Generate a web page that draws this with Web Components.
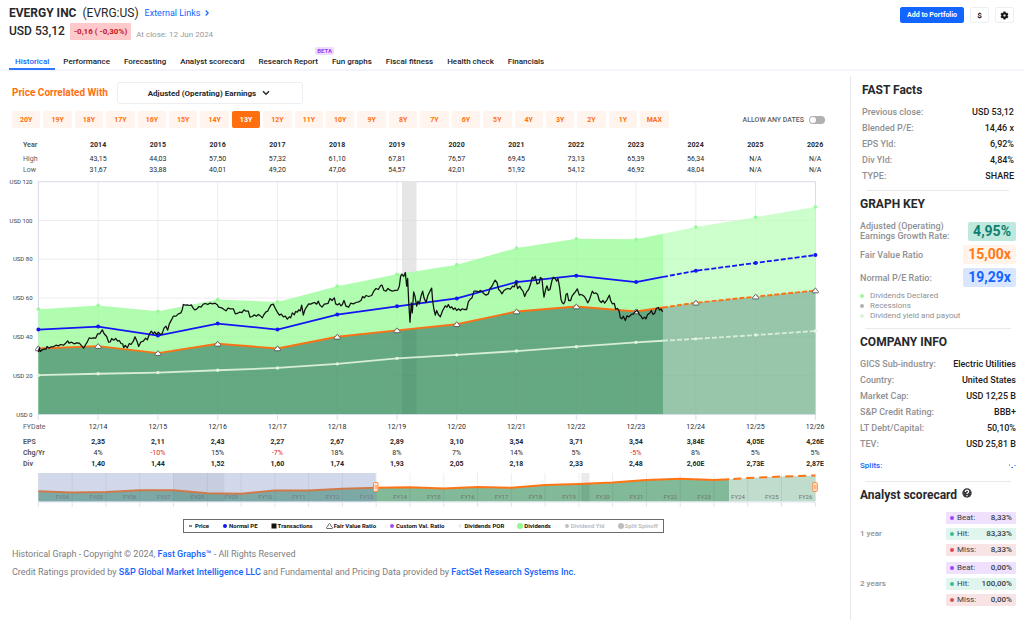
<!DOCTYPE html>
<html lang="en">
<head>
<meta charset="utf-8">
<meta name="viewport" content="width=device-width, initial-scale=1">
<title>EVERGY INC (EVRG:US) - Historical Graph</title>
<style>
  body { margin: 0; background: #fff; color: #26282c; font-family: Roboto, "Liberation Sans", sans-serif; }
</style>
</head>
<body>
<fg-app></fg-app>
<script>
const define = (name, render) => customElements.define(name, class extends HTMLElement {
  connectedCallback() {
    if (this.shadowRoot) return;
    const root = this.attachShadow({ mode: 'open' });
    const t = document.createElement('template');
    t.innerHTML = '<style>*{box-sizing:border-box}:host{display:block}button,select,input{font-family:inherit;margin:0}a{color:#1463ff;text-decoration:none}</style>' + render(this);
    root.append(t.content.cloneNode(true));
  }
});

define('fg-header', () => `
<style>
  :host { display: flex; justify-content: space-between; align-items: flex-start; padding: 6px 10px 0 9px; height: 47px; }
  h1 { display: flex; align-items: center; gap: 6px; margin: 0; font-size: 12px; line-height: 14px; font-weight: 700; }
  h1 .tick { font-weight: 400; }
  h1 a { font-size: 9px; font-weight: 400; display: flex; align-items: center; gap: 5px; }
  .price { display: flex; align-items: center; gap: 5px; margin-top: 3px; font-size: 12px; line-height: 17px; font-weight: 500; }
  .chg { background: #fdc9cb; color: #c9151e; border-radius: 1px; padding: 0 4px; font-size: 8px; font-weight: 700; }
  .date { font-size: 8px; font-weight: 400; color: #98999c; padding-top: 6px; line-height: 11px; }
  .actions { display: flex; gap: 6px; padding-top: 1px; }
  button { height: 16px; padding: 0; border: 1px solid #eeeef6; border-radius: 2px; background: #fff; width: 19px; display: grid; place-items: center; font-size: 8px; font-weight: 700; color: #111; }
  .add { width: auto; padding: 0 6px; background: #1266ff; border-color: #1266ff; color: #fff; font-size: 7px; }
</style>
<div>
  <h1><span>EVERGY INC</span><span class="tick">(EVRG:US)</span>
    <a href="#links">External Links <svg width="4" height="6" viewBox="0 0 4 6"><path d="M.7.5 3.2 3 .7 5.5" fill="none" stroke="#1463ff" stroke-width="1.2"/></svg></a></h1>
  <div class="price"><span>USD 53,12</span><span class="chg">-0,16 ( -0,30%)</span><span class="date">At close: 12 Jun 2024</span></div>
</div>
<div class="actions">
  <button class="add">Add to Portfolio</button>
  <button>$</button>
  <button aria-label="Settings"><svg width="9" height="9" viewBox="0 0 24 24"><path d="M19.4 13a7.6 7.6 0 0 0 0-2l2.1-1.7a.5.5 0 0 0 .1-.6l-2-3.5a.5.5 0 0 0-.6-.2l-2.5 1a7.3 7.3 0 0 0-1.7-1l-.4-2.6a.5.5 0 0 0-.5-.4h-4a.5.5 0 0 0-.5.4L9 5a7.6 7.6 0 0 0-1.7 1l-2.5-1a.5.5 0 0 0-.6.2l-2 3.5a.5.5 0 0 0 .1.6L4.5 11a8 8 0 0 0 0 2l-2.2 1.7a.5.5 0 0 0-.1.6l2 3.5c.1.2.4.3.6.2l2.5-1c.5.4 1.1.7 1.7 1l.4 2.6c0 .2.2.4.5.4h4c.2 0 .5-.2.5-.4l.4-2.6a7.3 7.3 0 0 0 1.7-1l2.5 1c.2.1.5 0 .6-.2l2-3.5a.5.5 0 0 0-.1-.6zM12 15.5a3.5 3.5 0 1 1 0-7 3.5 3.5 0 0 1 0 7z" fill="#111" stroke="#111" stroke-width="1"/></svg></button>
</div>`);

define('fg-tabs', () => `
<style>
  nav { display: flex; gap: 2px; padding-left: 9px; height: 24px; border-bottom: 2px solid #f4f4fc; }
  a { position: relative; padding: 9px 6px 0; font-size: 8px; line-height: 12px; font-weight: 500; color: #222327; height: 23px; }
  a.on { color: #1463ff; border-bottom: 2px solid #2f76ff; }
  sup { position: absolute; right: -10px; top: 0; padding: 0 2px; border-radius: 2px; background: #eedcff; color: #9b40f5; font-size: 6px; line-height: 8px; font-weight: 700; }
</style>
<nav>${['Historical', 'Performance', 'Forecasting', 'Analyst scorecard', 'Research Report', 'Fun graphs', 'Fiscal fitness', 'Health check', 'Financials']
  .map((t, i) => `<a href="#tab${i}"${i ? '' : ' class="on"'}>${t}${i === 4 ? '<sup>BETA</sup>' : ''}</a>`).join('')}</nav>`);

define('fg-controls', () => `
<style>
  :host { padding: 0 20px 0 4px; }
  .metric { display: flex; align-items: center; gap: 9px; }
  .metric > label { color: #ff6f0f; font-size: 10px; line-height: 12px; font-weight: 700; }
  .pick { display: grid; width: 186px; }
  .pick > * { grid-area: 1 / 1; }
  select { appearance: none; width: 100%; height: 22px; border: 1px solid #ededf3; border-radius: 3px; background: #fff; font-size: 8px; font-weight: 700; color: #26282c; text-align: center; text-align-last: center; padding: 0 16px 0 0; }
  .pick svg { justify-self: end; align-self: center; margin-right: 33px; pointer-events: none; }
  .row { display: flex; align-items: center; gap: 74px; margin-top: 7px; }
  .years { display: flex; flex: 1; gap: 3px; }
  button { flex: 1 1 0; min-width: 0; height: 17px; padding: 0; border: 0; border-radius: 2px; background: #fff5ee; color: #ff6f0f; font-size: 7px; font-weight: 700; }
  button.on { background: #ff6f0f; color: #fff; }
  .any { display: flex; align-items: center; gap: 5px; color: #5b5c60; font-size: 7px; font-weight: 500; white-space: nowrap; }
  input { appearance: none; width: 16px; height: 8px; border-radius: 4px; background: #b0b0b3; display: flex; padding: 1px; }
  input::before { content: ''; width: 6px; height: 6px; border-radius: 50%; background: #fff; }
</style>
<div class="metric"><label for="metric">Price Correlated With</label>
  <div class="pick"><select id="metric"><option>Adjusted (Operating) Earnings</option></select>
  <svg width="8" height="6" viewBox="0 0 8 6"><path d="M1 1.2 4 4.2 7 1.2" fill="none" stroke="#26282c" stroke-width="1.5"/></svg></div>
</div>
<div class="row">
  <div class="years">${[20, 19, 18, 17, 16, 15, 14, 13, 12, 11, 10, 9, 8, 7, 6, 5, 4, 3, 2, 1].map(n => `<button${n === 13 ? ' class="on"' : ''}>${n}Y</button>`).join('')}<button>MAX</button></div>
  <label class="any">ALLOW ANY DATES <input type="checkbox"></label>
</div>`);

const tableCss = `
  table { width: 100%; table-layout: fixed; border-collapse: collapse; }
  th, td { padding: 0; text-align: center; font-size: 7px; line-height: 11px; font-weight: 400; white-space: nowrap; }
  tr > :first-child { width: 7.2%; text-align: left; padding-left: 15px; color: #5b5c60; }
  .b > * { font-weight: 700; }
  .neg { color: #e0222c; }`;
const row = (label, cells, cls = '', tag = 'td') => `<tr class="${cls}"><th scope="row">${label}</th>${cells.map(c => `<${tag}${c[0] === '-' ? ' class="neg"' : ''}>${c}</${tag}>`).join('')}</tr>`;
const list = s => s.split(' ');

define('fg-price-table', () => `
<style>${tableCss} .year > * { padding-bottom: 3px; }</style>
<table>
${row('Year', list('2014 2015 2016 2017 2018 2019 2020 2021 2022 2023 2024 2025 2026'), 'b year', 'th')}
${row('High', list('43,15 44,03 57,50 57,32 61,10 67,81 76,57 69,45 73,13 65,39 56,34 N/A N/A'))}
${row('Low', list('31,67 33,88 40,01 49,20 47,06 54,57 42,01 51,92 54,12 46,92 48,04 N/A N/A'))}
</table>`);

define('fg-eps-table', () => `
<style>${tableCss} .date > * { padding-bottom: 4px; }</style>
<table>
${row('FYDate', list('12/14 12/15 12/16 12/17 12/18 12/19 12/20 12/21 12/22 12/23 12/24 12/25 12/26'), 'date')}
${row('EPS', list('2,35 2,11 2,43 2,27 2,67 2,89 3,10 3,54 3,71 3,54 3,84E 4,05E 4,26E'), 'b')}
${row('<b>Chg/Yr</b>', list('4% -10% 15% -7% 18% 8% 7% 14% 5% -5% 8% 5% 5%'))}
${row('Div', list('1,40 1,44 1,52 1,60 1,74 1,93 2,05 2,18 2,33 2,48 2,60E 2,73E 2,87E'), 'b')}
</table>`);

/* Price traces, in thirds of a chart unit: [x offset, points]. */
const TRACE = [
  [0, '115,533 118,520 121,531 127,526 133,523 138,524 141,516 148,521 152,517 160,517 168,512 175,514 182,510 190,512 197,506 203,499 207,506 215,503 222,508 230,505 238,506 245,514 251,521 257,510 262,502 268,490 274,492 280,490 287,491 293,478 299,478 303,472 307,466 312,477 320,486 326,503 331,502 335,492 341,497 347,492 353,500 358,498 363,507 368,508 371,519 376,513 382,520 388,507 393,510 400,500 405,487 411,500 416,516 422,503 430,500 437,491 442,496 448,479 454,470 460,478 464,472 470,480 475,473 481,480 487,476 492,461 498,455 503,467 508,448 514,437 520,425 528,425 535,418 543,415 547,405 550,390 556,392 562,391 568,393 574,391 579,400 584,406 590,404 597,396 603,398 610,389 617,387 623,390 630,386 638,388 645,386 652,391 656,398 665,400 672,405 678,409 684,401 692,403 700,403 706,418 712,417 718,413 726,414 732,406 738,410 745,410 750,428 757,426 763,421 769,425 775,420 781,424 787,430 792,420 798,412 803,410 808,400 813,391 820,389 826,402 832,413 838,422 844,419 850,427 856,425 862,434'],
  [840, '28,427 32,430 37,415 43,421 47,411 52,413 56,406 61,409 65,392 70,422 75,405 80,397 86,388 92,389 98,386 104,384 110,389 115,380 120,392 126,398 133,389 138,388 144,387 150,372 156,378 163,370 167,388 173,391 178,387 183,394 187,390 192,378 198,395 206,398 212,386 220,388 228,384 236,382 243,378 248,366 253,370 258,363 266,366 275,363 282,349 288,342 295,345 302,333 306,332 312,348 318,350 324,342 330,347 337,350 343,348 353,347 358,335 362,305 366,299 371,306 376,294 380,335 383,312 386,380 390,443 394,385 397,415 401,352 405,365 410,395 414,380 418,388 423,365 428,350 432,370 438,384 444,362 450,350 455,341 458,380 462,405 466,422 470,408 475,420 481,427 488,408 496,394 501,398 505,390 510,400 515,397 520,405 525,400 530,408 536,403 541,408 547,403 553,405 560,405 565,382 570,375 576,370 582,350 589,350 596,352 601,348 607,352 612,358 618,362 625,358 630,342 636,335 641,325 645,317 651,324 656,345 661,350 666,358 672,348 678,344 684,342 691,344 698,335 703,337 708,322 713,342 719,335 724,344 729,350 734,366 740,352 746,345 752,328 757,308 761,313 766,305 771,328 778,325 781,309 786,313 789,345 792,368 797,345 801,334 805,348'],
  [1650, '0,345 6,318 10,308 15,312 20,320 24,312 29,340 33,375 37,385 41,388 45,380 48,360 52,357 56,378 62,378 66,365 72,357 76,352 82,343 88,362 92,360 98,362 103,366 108,374 113,385 118,377 122,365 127,350 132,357 138,355 143,360 148,378 154,384 159,378 164,386 171,376 178,362 182,378 187,388 193,387 197,404 202,402 207,408 211,430 215,433 220,425 226,438 231,424 237,427 244,420 250,419 255,412 262,407 268,420 273,425 278,433 284,428 288,433 293,420 299,416 304,408 309,420 314,416 319,402 325,399 329,407 333,403 338,412']
];
const tracePoints = TRACE.flatMap(([dx, p]) => p.split(' ').map(q => {
  const [a, b] = q.split(',').map(Number);
  return (a + dx) + ',' + b;
})).join(' ');

define('fg-chart', () => {
  const eps = [2.27, 2.35, 2.11, 2.43, 2.27, 2.67, 2.89, 3.10, 3.54, 3.71, 3.54, 3.84, 4.05, 4.26];
  const div = [1.35, 1.40, 1.44, 1.52, 1.60, 1.74, 1.93, 2.05, 2.18, 2.33, 2.48, 2.60, 2.73, 2.87];
  const X0 = 30.4, STEP = 59.77, Y0 = 238.5, K = 1.94, NOW = 655;
  const x = i => +(X0 + STEP * i).toFixed(2), y = v => +(Y0 - v * K).toFixed(2);
  const s = {
    total: eps.map((e, i) => y(15 * (e + div[i]))), fair: eps.map(e => y(15 * e)),
    pe: eps.map(e => y(19.29 * e)), div: div.map(d => y(15 * d))
  };
  const nowT = (NOW - x(10)) / STEP;
  const at = a => +(a[10] + (a[11] - a[10]) * nowT).toFixed(2);
  const past = a => a.slice(0, 11).map((v, i) => `${x(i)},${v}`).join(' ') + ` ${NOW},${at(a)}`;
  const next = a => `${NOW},${at(a)} ` + a.slice(11).map((v, i) => `${x(i + 11)},${v}`).join(' ');
  const areas = (a, fill, fill2) => `<polygon points="${X0},${Y0} ${past(a)} ${NOW},${Y0}" fill="${fill}"/>
    <polygon points="${NOW},${Y0} ${next(a)} ${x(13)},${Y0}" fill="${fill2}"/>`;
  const line = (a, c, w) => `<polyline points="${past(a)}" stroke="${c}" stroke-width="${w}" fill="none"/><polyline points="${next(a)}" stroke="${c}" stroke-width="${w}" stroke-dasharray="5 2" fill="none"/>`;
  const dots = (a, c, r) => a.map((v, i) => `<circle cx="${x(i)}" cy="${v}" r="${r}" fill="${c}"/>`).join('');
  let grid = '', labels = '', over = '';
  for (let i = 0; i < 14; i++) {
    grid += `<path d="M${x(i)} 5.5V244" stroke="${i % 13 ? '#f1f1f6' : '#d5dbea'}"/><path d="M${x(i)} 239V244" stroke="#dfe3f2"/>`;
    over += i % 13 ? `<path d="M${x(i)} 5.5V${Y0}" stroke="#000" stroke-opacity=".02"/>` : '';
  }
  for (let v = 0; v <= 120; v += 20) {
    grid += `<path d="M${X0} ${y(v)}H${x(13)}" stroke="${v % 120 ? '#f1f1f3' : '#d5dbea'}"/>`;
    over += v % 120 ? `<path d="M${X0} ${y(v)}H${x(13)}" stroke="#000" stroke-opacity=".02"/>` : '';
    labels += `<text x="24.5" y="${y(v) + 2}" text-anchor="end">USD ${v}</text>`;
  }
  return `
<style>
  svg { display: block; width: 100%; height: auto; overflow: visible; }
  text { font-size: 6px; fill: #3c3d41; }
</style>
<svg viewBox="0 0 837 246" role="img" aria-label="Historical price and valuation">
  ${grid}
  <rect x="394" y="5" width="14.5" height="233" fill="#e6e6e6"/>
  ${areas(s.total, '#b0fdb0', '#ccffcc')}
  ${areas(s.fair, '#65a983', '#98c6ab')}
  <polygon points="394,${y(43.4)} 408.5,${y(44)} 408.5,${Y0} 394,${Y0}" fill="#5d9f7a"/>
  ${over}
  <path d="M${X0} ${Y0}H${x(13)}" stroke="#d5dbea"/>
  ${dots(s.total, '#96fb96', 1.8)}
  ${line(s.div, '#d7edd7', 1.8)}${dots(s.div, '#e2f3e2', 1.7)}
  ${line(s.pe, '#1414f5', 1.8)}${dots(s.pe, '#1414f5', 2)}
  ${line(s.fair, '#f97316', 1.9)}
  ${s.fair.map((v, i) => `<path d="M${x(i) - 3} ${v + 1.8}q0 .5.5.5h5q.5 0 .5-.5c0-1.5-1-2-1.5-2.2q-.5-1.9-1.5-1.9t-1.5 1.9c-.5.2-1.5.7-1.5 2.2z" fill="#fff" stroke="#444" stroke-width=".8"/>`).join('')}
  <g transform="translate(-8 -1) translate(0 -.5) scale(.33333)"><polyline points="${tracePoints}" fill="none" stroke="#111" stroke-width="3.8" stroke-linejoin="round"/></g>
  ${labels}
</svg>`;
});

define('fg-range', () => {
  const X0 = 30.4, S = 33.78, B = 31.5;
  const v = [21.3, 22.5, 22, 20.3, 20.3, 23.3, 23.7, 20.5, 20.5, 18.7, 17.7, 17.3, 18.5, 16.9, 17.8, 15, 14, 12.5, 10, 8.7, 10];
  const x = i => +(X0 + S * i).toFixed(2);
  const past = v.map((q, i) => `${x(i)},${q}`).join(' ') + ' 721.3,9.2';
  const next = `721.3,9.2 ${x(21)},8 ${x(22)},6.5 ${x(23)},5.5`;
  let ticks = '', text = '';
  for (let i = 0; i < 24; i++) {
    ticks += `<path d="M${x(i)} 3V31" stroke="#000" stroke-opacity=".07"/><path d="M${x(i)} 32V37" stroke="#dfe3f2"/>`;
    if (i) text += `<text x="${x(i) - 3}" y="29" text-anchor="end">FY${String(i + 3).padStart(2, '0')}</text>`;
  }
  const grip = cx => `<rect x="${cx - 2}" y="12.5" width="4.5" height="9" rx="1" fill="#ffe3d0" stroke="#ff8a3c"/><path d="M${cx - .3} 15v4M${cx + 1} 15v4" stroke="#ff8a3c" stroke-width=".6"/>`;
  return `
<style>svg { display: block; width: 100%; height: auto; } text { font-size: 6px; fill: #73726f; }</style>
<svg viewBox="0 0 837 40" role="img" aria-label="Date range">
  <polygon points="${X0},${B} ${past} 721.3,${B}" fill="#82ba99"/>
  <polygon points="721.3,${B} ${next} ${x(23)},${B}" fill="#c0dccc"/>
  <rect x="165.3" y="3" width="51" height="28.5" fill="#000" fill-opacity=".06"/>
  <rect x="573.3" y="3" width="8.2" height="28.5" fill="#000" fill-opacity=".08"/>
  ${ticks}
  <path d="M${X0} 32H${x(23)}" stroke="#dfe3f2"/>
  <polyline points="${past}" fill="none" stroke="#ff7414" stroke-width="2"/>
  <polyline points="${next}" fill="none" stroke="#ff7414" stroke-width="2" stroke-dasharray="8 5" stroke-dashoffset="9"/>
  ${text}
  <rect x="${X0}" y="3" width="337.3" height="28.5" fill="#7088bf" fill-opacity=".33"/>
  ${grip(367.5)}${grip(806.8)}
</svg>`;
});

define('fg-legend', () => {
  const c = (f, r) => `<svg width="6" height="6" viewBox="0 0 6 6"><circle cx="3" cy="3" r="${r}" fill="${f}"/></svg>`;
  const items = [
    ['<svg width="3" height="6" viewBox="0 0 3 6"><path d="M0 3h3" stroke="#111"/></svg>', 'Price'],
    [c('#1414f5', 2), 'Normal PE'],
    ['<svg width="6" height="6" viewBox="0 0 6 6"><path d="M.5.5h5v5h-5z" fill="#111"/></svg>', 'Transactions'],
    ['<svg width="7" height="6" viewBox="0 0 7 6"><path d="M.5 5q0 .5.5.5h5q.5 0 .5-.5c0-1.3-1-1.6-1.5-1.8Q4.7.6 3.5.6T2 3.2C1.5 3.4.5 3.7.5 5z" fill="#fff" stroke="#333" stroke-width=".7"/></svg>', 'Fair Value Ratio'],
    [c('#a04df5', 2), 'Custom Val. Ratio'], [c('#e2f3e2', 1.7), 'Dividends POR'], [c('#90f890', 3), 'Dividends'],
    [c('#bdbdbf', 1.9), 'Dividend Yld', 1], [c('#bdbdbf', 3), 'Split Spinoff', 1]];
  return `
<style>
  :host { padding-right: 6px; }
  ul { display: flex; width: max-content; margin: 0 auto; padding: 0 5px; border: 1px solid #6b6b6e; list-style: none; height: 14px; gap: 13px; align-items: center; font-size: 6px; line-height: 8px; font-weight: 700; color: #111; }
  li { display: flex; align-items: center; gap: 1px; white-space: nowrap; }
  li:first-child { gap: 3px; }
  .off { color: #bdbdbf; }
</style>
<ul>${items.map(([i, t, off]) => `<li${off ? ' class="off"' : ''}>${i}<span>${t}</span></li>`).join('')}</ul>`;
});

define('fg-footer', () => `
<style>
  :host { padding: 0 4px; }
  p { margin: 0 0 6px; font-size: 9px; line-height: 12px; color: #7c7d81; }
  a { font-weight: 500; }
</style>
<p>Historical Graph - Copyright © 2024, <a href="#fg">Fast Graphs™</a> - All Rights Reserved</p>
<p>Credit Ratings provided by <a href="#sp">S&amp;P Global Market Intelligence LLC</a> and Fundamental and Pricing Data provided by <a href="#fs">FactSet Research Systems Inc.</a></p>`);

define('fg-section', el => `
<style>
  :host { border-bottom: 1px solid transparent; }
  h2 { margin: 0; font-size: 12px; line-height: 14px; font-weight: 700; display: flex; align-items: flex-start; gap: 5px; }
  .rule { border: 0; border-top: 1px solid #e9e9ec; margin: 0 5px; }
</style>
<h2>${el.getAttribute('heading')}<slot name="extra"></slot></h2>
<slot></slot>
${el.hasAttribute('last') ? '' : '<hr class="rule">'}`);

define('fg-facts', el => `
<style>
  dl { margin: 7px 0 6px; }
  div { display: flex; justify-content: space-between; font-size: 9px; line-height: 16px; }
  dt { color: #8f9093; font-weight: 500; font-size: 8px; }
  dt { font-size: 9px; }
  dd { margin: 0; font-weight: 500; color: #1b1c20; }
</style>
<dl>${el.getAttribute('rows').split('|').map(r => r.split('=')).map(([k, v]) => `<div><dt>${k}</dt><dd>${v}</dd></div>`).join('')}</dl>`);

define('fg-key', () => `
<style>
  dl { margin: 10px 0 4px; display: grid; gap: 4px; }
  div { display: flex; justify-content: space-between; align-items: center; font-weight: 500; font-size: 9px; line-height: 10px; color: #8f9093; }
  dd { margin: 0; border-radius: 2px; padding: 0 5px; font-size: 14px; line-height: 19px; font-weight: 700; }
  .g { background: #bfe9de; color: #0e7f70; } .o { background: #fff3ea; color: #ff7a14; } .b { background: #d9e6ff; color: #1463ff; }
  ul { margin: 0 0 7px; padding: 0; list-style: none; font-size: 8px; line-height: 10px; color: #8f9093; }
  li { display: flex; align-items: center; gap: 6px; }
  i { width: 4px; height: 4px; border-radius: 50%; }
</style>
<dl>
  <div><dt>Adjusted (Operating)<br>Earnings Growth Rate:</dt><dd class="g">4,95%</dd></div>
  <div><dt>Fair Value Ratio</dt><dd class="o">15,00x</dd></div>
  <div><dt>Normal P/E Ratio:</dt><dd class="b">19,29x</dd></div>
</dl>
<ul><li><i style="background:#a0f8a0"></i>Dividends Declared</li><li><i style="background:#b0b0b2"></i>Recessions</li><li><i style="background:#dff2d8"></i>Dividend yield and payout</li></ul>`);

define('fg-scores', el => `
<style>
  :host { display: flex; justify-content: space-between; align-items: center; font-size: 8px; line-height: 12px; color: #8f9093; font-weight: 500; }
  dl { margin: 0; width: 70px; display: grid; gap: 4px; color: #3b3c40; }
  div { display: flex; align-items: center; gap: 3px; padding: 0 4px; border-radius: 1px; background: var(--bg); }
  div::before { content: ''; width: 4px; height: 4px; border-radius: 50%; background: var(--dot); }
  dt { flex: 1; font-weight: 400; } dd { margin: 0; }
</style>
<span>${el.getAttribute('label')}</span>
<dl>${el.getAttribute('values').split(' ').map((v, i) => `<div style="--bg:${['#efe0fd', '#e0f5ee', '#f8e4e5'][i]};--dot:${['#a040f8', '#3dba90', '#dc4950'][i]}"><dt>${['Beat:', 'Hit:', 'Miss:'][i]}</dt><dd>${v}</dd></div>`).join('')}</dl>`);

define('fg-app', () => `
<style>
  .body { display: flex; align-items: stretch; }
  main { flex: 1; min-width: 0; padding: 11px 5px 16px 8px; }
  fg-price-table { margin: 12px 0 0; }
  fg-legend { margin: 9px 0 15px; }
  aside { width: 174px; flex: none; margin-top: 5px; border-left: 1px solid #e6e6ec; padding: 7px 8px 8px 9px; }
  .first { padding: 0 2px; }
  fg-section { margin-bottom: 5px; }
  .splits { display: flex; justify-content: space-between; align-items: center; font-size: 8px; line-height: 12px; font-weight: 500; margin: 8px 0 9px; color: #1463ff; text-decoration: none; }
  fg-scores { margin-top: 2px; }
  fg-scores.top { margin: 10px 0 6px; }
</style>
<fg-header></fg-header>
<fg-tabs></fg-tabs>
<div class="body">
  <main>
    <fg-controls></fg-controls>
    <fg-price-table></fg-price-table>
    <fg-chart></fg-chart>
    <fg-eps-table></fg-eps-table>
    <fg-range></fg-range>
    <fg-legend></fg-legend>
    <fg-footer></fg-footer>
  </main>
  <aside>
    <fg-section class="first" heading="FAST Facts"><fg-facts rows="Previous close:=USD 53,12|Blended P/E:=14,46 x|EPS Yld:=6,92%|Div Yld:=4,84%|TYPE:=SHARE"></fg-facts></fg-section>
    <fg-section heading="GRAPH KEY"><fg-key></fg-key></fg-section>
    <fg-section heading="COMPANY INFO"><fg-facts rows="GICS Sub-industry:=Electric Utilities|Country:=United States|Market Cap:=USD 12,25 B|S&amp;amp;P Credit Rating:=BBB+|LT Debt/Capital:=50,10%|TEV:=USD 25,81 B"></fg-facts>
      <a class="splits" href="#splits">Splits: <svg width="8" height="5" viewBox="0 0 8 5"><path d="M1 1h1M3.500 3.500h1.500M6.500 1.500h1" stroke="#1463ff" stroke-width="1.1"/></svg></a></fg-section>
    <fg-section heading="Analyst scorecard" last>
      <svg slot="extra" width="10" height="10" viewBox="0 0 18 18"><circle cx="9" cy="9" r="8.500" fill="#3a3b3f"/><path d="M6 7c0-4 6-4 6-.5C12 9 9 8.500 9 11M9 12.700v2.300" fill="none" stroke="#fff" stroke-width="2.200"/></svg>
      <fg-scores class="top" label="1 year" values="8,33% 83,33% 8,33%"></fg-scores>
      <fg-scores label="2 years" values="0,00% 100,00% 0,00%"></fg-scores>
    </fg-section>
  </aside>
</div>`);
</script>
</body>
</html>
